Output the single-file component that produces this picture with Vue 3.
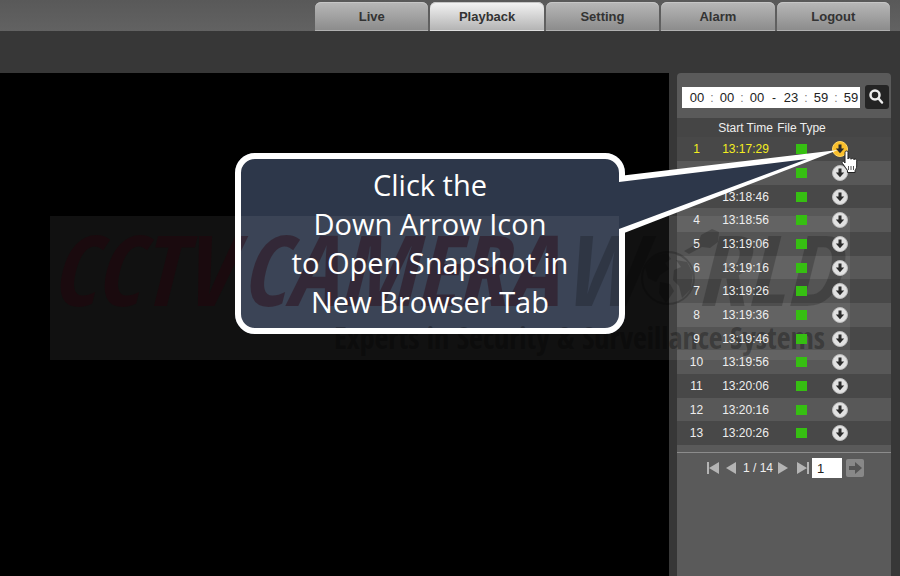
<template>
  <div class="page">
    <header class="topbar">
      <nav class="tabs">
        <a
          v-for="tab in tabs"
          :key="tab"
          href="#"
          class="tab"
          :class="{ active: tab === activeTab }"
          @click.prevent="activeTab = tab"
          >{{ tab }}</a
        >
      </nav>
    </header>

    <main class="content">
      <section class="video"></section>

      <aside class="panel">
        <form class="search" @submit.prevent>
          <div class="timeRange">
            <template v-for="(part, index) in timeParts" :key="part.label">
              <span v-if="index" class="sep" :class="{ dash: index === 3 }">{{
                index === 3 ? "-" : ":"
              }}</span>
              <input v-model="part.value" type="text" :aria-label="part.label" />
            </template>
          </div>
          <button type="submit" class="searchButton" aria-label="Search">
            <svg viewBox="0 0 24 24" width="24" height="24">
              <circle cx="10" cy="10" r="4.5" />
              <path d="M13.5 13.5 L17 17.5" />
            </svg>
          </button>
        </form>

        <table class="files">
          <thead>
            <tr>
              <th class="num"></th>
              <th class="time">Start Time</th>
              <th class="type">File Type</th>
              <th class="action"></th>
              <th></th>
            </tr>
          </thead>
          <tbody>
            <tr
              v-for="(time, index) in times"
              :key="time"
              :class="{ selected: index === selected }"
              @click="selected = index"
            >
              <td>{{ index + 1 }}</td>
              <td>{{ time }}</td>
              <td><span class="marker"></span></td>
              <td>
                <button type="button" class="download" aria-label="Open snapshot">
                  <svg viewBox="0 0 16 16" width="16" height="16">
                    <circle class="disc" cx="8" cy="8" r="7.5" />
                    <path
                      d="M6.5 3.5h3v4h2.7L8 12.3 3.8 7.5h2.7z"
                      fill="#2b2b2b"
                    />
                  </svg>
                </button>
              </td>
              <td></td>
            </tr>
          </tbody>
        </table>

        <div class="pager">
          <button type="button" aria-label="First page">
            <svg viewBox="0 0 12 12" width="12" height="12">
              <path d="M0 0h2v12H0zM12 0v12L2 6z" />
            </svg>
          </button>
          <button type="button" aria-label="Previous page">
            <svg viewBox="0 0 10 12" width="10" height="12">
              <path d="M10 0v12L0 6z" />
            </svg>
          </button>
          <span class="count">{{ page }} / 14</span>
          <button type="button" aria-label="Next page">
            <svg viewBox="0 0 10 12" width="10" height="12">
              <path d="M0 0v12l10-6z" />
            </svg>
          </button>
          <button type="button" class="last" aria-label="Last page">
            <svg viewBox="0 0 12 12" width="12" height="12">
              <path d="M10 0h2v12h-2zM0 0v12l10-6z" />
            </svg>
          </button>
          <input v-model="page" type="text" aria-label="Page" />
          <button type="button" class="go" aria-label="Go to page">
            <svg viewBox="0 0 18 18" width="18" height="18">
              <path d="M3 7h6V3l7 6-7 6v-4H3z" />
            </svg>
          </button>
        </div>
      </aside>
    </main>

    <div class="callout">
      <svg class="pointer" viewBox="0 0 222 90" width="222" height="90">
        <path d="M0 26 L219 0 L0 85z" fill="#fff" />
        <path d="M0 32 L188 9 L0 79z" fill="#2d374a" />
      </svg>
      <p>
        Click the<br />Down Arrow Icon<br />to Open Snapshot in<br />New Browser
        Tab
      </p>
    </div>

    <div class="watermark">
      <div class="brand">
        <span class="red">CCTV</span>
        <span class="red">CAMERA</span>
        <span class="world"
          >W<svg class="globe" viewBox="0 0 56 56" width="56" height="56">
            <circle cx="28" cy="28" r="26" fill="none" stroke="#000" stroke-width="2" />
            <path
              d="M5 17 L14 6 L27 3 L31 9 L25 13 L29 19 L20 25 L16 32 L8 28z M20 32 L30 34 L34 41 L26 53 L19 43z M36 10 L47 12 L53 23 L51 39 L42 48 L39 36 L33 30 L34 20 L41 17z"
            />
            <path
              d="M44 1 L58 -7 L61 -15 L72 -21 L79 -18 L78 -8 L70 -2 L62 -3 L49 4z"
            /></svg
          >RLD</span
        >
      </div>
      <div class="tagline">Experts in Security &amp; Surveillance Systems</div>
    </div>

    <svg class="cursor" viewBox="0 0 18 24" width="18" height="24">
      <path
        d="M4 2.5C4 .5 7 .5 7 2.5V9c0-1.6 3-1.6 3 .3 0-1.5 3-1.3 3 .5 0-1.3 2.7-1 2.7.7V16c0 2-1 3-1.6 4.5V22.5H6.5V20.5C5 18.5 3.500 16 1.500 13.500.3 11.500 2 10.500 3.200 12L4 13z"
        fill="#fff"
        stroke="#222"
        stroke-width="1"
      />
      <path d="M7.5 16v4M10 16v4M12.5 16v4" stroke="#555" />
    </svg>
  </div>
</template>

<script setup>
import { ref } from "vue";

const tabs = ["Live", "Playback", "Setting", "Alarm", "Logout"];
const activeTab = ref("Playback");
const selected = ref(0);
const page = ref(1);

const timeParts = ref([
  { label: "Start hour", value: "00" },
  { label: "Start minute", value: "00" },
  { label: "Start second", value: "00" },
  { label: "End hour", value: "23" },
  { label: "End minute", value: "59" },
  { label: "End second", value: "59" },
]);

const times = [
  "13:17:29",
  "13:18:36",
  "13:18:46",
  "13:18:56",
  "13:19:06",
  "13:19:16",
  "13:19:26",
  "13:19:36",
  "13:19:46",
  "13:19:56",
  "13:20:06",
  "13:20:16",
  "13:20:26",
];
</script>

<style>
body {
  margin: 0;
  background: #373737;
}
</style>

<style scoped>
.page {
  position: relative;
  display: flex;
  flex-direction: column;
  min-height: 100vh;
  overflow: hidden;
  background: #373737;
  font-family: "Liberation Sans", Arial, sans-serif;
  font-size: 12px;
  color: #eee;
}

button {
  display: flex;
  margin: 0;
  padding: 0;
  border: none;
  background: none;
  cursor: pointer;
}

input {
  box-sizing: border-box;
  margin: 0;
  padding: 0;
  border: none;
  background: #fff;
  font-family: inherit;
  font-size: 13px;
  color: #222;
}

.topbar {
  display: flex;
  justify-content: flex-end;
  padding: 2px 10px 0 0;
  background: linear-gradient(#595959, #626262);
}

.tabs {
  display: grid;
  grid-template-columns: repeat(5, 1fr);
  gap: 2px;
  width: 575px;
}

.tab {
  box-sizing: border-box;
  height: 29px;
  border-bottom: 1px solid #b0b0b0;
  border-radius: 6px 6px 0 0;
  background: linear-gradient(#b8b8b8, #8c8c8c);
  box-shadow: inset 0 1px #c6c6c6;
  font-size: 13px;
  font-weight: bold;
  line-height: 29px;
  text-align: center;
  text-decoration: none;
  color: #333;
}

.tab.active {
  background: linear-gradient(#f4f4f4, #b4b4b4);
  border-bottom-color: #ddd;
}

.content {
  display: flex;
  flex: 1;
  gap: 8px;
  padding: 42px 9px 0 0;
}

.video {
  flex: 1;
  background: #000;
}

.panel {
  width: 214px;
  border-radius: 4px 4px 0 0;
  background: #5a5a5a;
}

.search {
  display: flex;
  align-items: center;
  gap: 5px;
  height: 45px;
  padding-left: 5px;
}

.timeRange {
  display: flex;
  align-items: center;
  box-sizing: border-box;
  width: 178px;
  height: 21px;
  margin-top: 4px;
  padding-left: 6px;
  background: #fff;
}

.timeRange input {
  width: 18px;
  text-align: center;
}

.sep {
  width: 12px;
  text-align: center;
  color: #777;
}

.dash {
  width: 16px;
  color: #222;
}

.searchButton {
  margin-top: 2px;
  border-radius: 3px;
  background: #242424;
}

.searchButton svg {
  fill: none;
  stroke: #eee;
  stroke-width: 2.5;
  stroke-linecap: round;
}

.files {
  width: 100%;
  table-layout: fixed;
  border-collapse: collapse;
}

.files th,
.files td {
  padding: 0;
  text-align: center;
  font-weight: normal;
  white-space: nowrap;
}

.files thead tr {
  height: 19px;
  background: #454545;
}

.num {
  width: 39px;
}

.time {
  width: 59px;
}

.type {
  width: 53px;
}

.action {
  width: 23px;
}

.files tbody tr {
  height: 24px;
  background: #585858;
}

.files tbody tr:nth-child(odd) {
  background: #484848;
}

.files tbody tr:nth-child(3n) {
  height: 23px;
}

/* row contents stay readable over the watermark */
.files tbody td {
  position: relative;
  z-index: 2;
}

.files tbody .selected {
  color: #f4ee20;
}

.marker {
  display: block;
  width: 11px;
  height: 10px;
  margin: 0 auto;
  background: #36bf12;
}

.download {
  margin: 0 auto;
}

.disc {
  fill: #e2e2e2;
  stroke: #bbb;
}

.selected .disc {
  fill: #fbc02c;
  stroke: #ffd866;
}

.pager {
  display: flex;
  align-items: center;
  gap: 7px;
  margin-top: 7px;
  padding: 5px 0 0 30px;
  border-top: 1px solid #8c8c8c;
}

.pager svg {
  fill: #b4b4b4;
}

.pager .count {
  width: 28px;
  text-align: center;
  white-space: nowrap;
}

.pager .last {
  margin: 0 -4px 0 2px;
}

.pager input {
  width: 30px;
  height: 20px;
  padding-left: 5px;
}

.pager .go {
  margin-left: -3px;
  border-radius: 2px;
  background: #888;
}

.pager .go svg {
  fill: #555;
}

.callout {
  position: absolute;
  top: 153px;
  left: 235px;
  box-sizing: border-box;
  width: 390px;
  height: 181px;
  padding: 12px 6px 0;
  border-radius: 20px;
  background: #2d374a;
}

.callout::before {
  content: "";
  position: absolute;
  inset: 0;
  z-index: 3;
  border: 6px solid #fff;
  border-radius: 20px;
}

.callout p {
  position: relative;
  z-index: 4;
  margin: 0;
  font-family: "Open Sans", "Noto Sans", sans-serif;
  font-size: 29px;
  line-height: 39px;
  text-align: center;
  color: #fff;
}

.pointer {
  position: absolute;
  top: -3px;
  left: 384px;
  z-index: 4;
}

.watermark {
  position: absolute;
  top: 216px;
  left: 50px;
  z-index: 1;
  width: 800px;
  height: 144px;
  background: rgba(255, 255, 255, 0.065);
  pointer-events: none;
}

.brand {
  display: grid;
  grid-template-columns: 190px 322px 1fr;
  height: 104px;
  font-family: "Open Sans Condensed", "Open Sans", sans-serif;
  font-size: 98px;
  font-weight: bold;
  font-style: italic;
  line-height: 104px;
  white-space: nowrap;
}

.red {
  color: rgba(40, 0, 10, 0.4);
}

.world {
  color: #000;
  opacity: 0.2;
}

.globe {
  overflow: visible;
}

.tagline {
  padding-right: 25px;
  font-family: "Open Sans Condensed", "Open Sans", sans-serif;
  font-size: 30px;
  font-weight: bold;
  line-height: 36px;
  text-align: right;
  white-space: nowrap;
  color: rgba(0, 0, 0, 0.3);
}

.cursor {
  position: absolute;
  top: 150px;
  left: 841px;
  z-index: 5;
}
</style>
